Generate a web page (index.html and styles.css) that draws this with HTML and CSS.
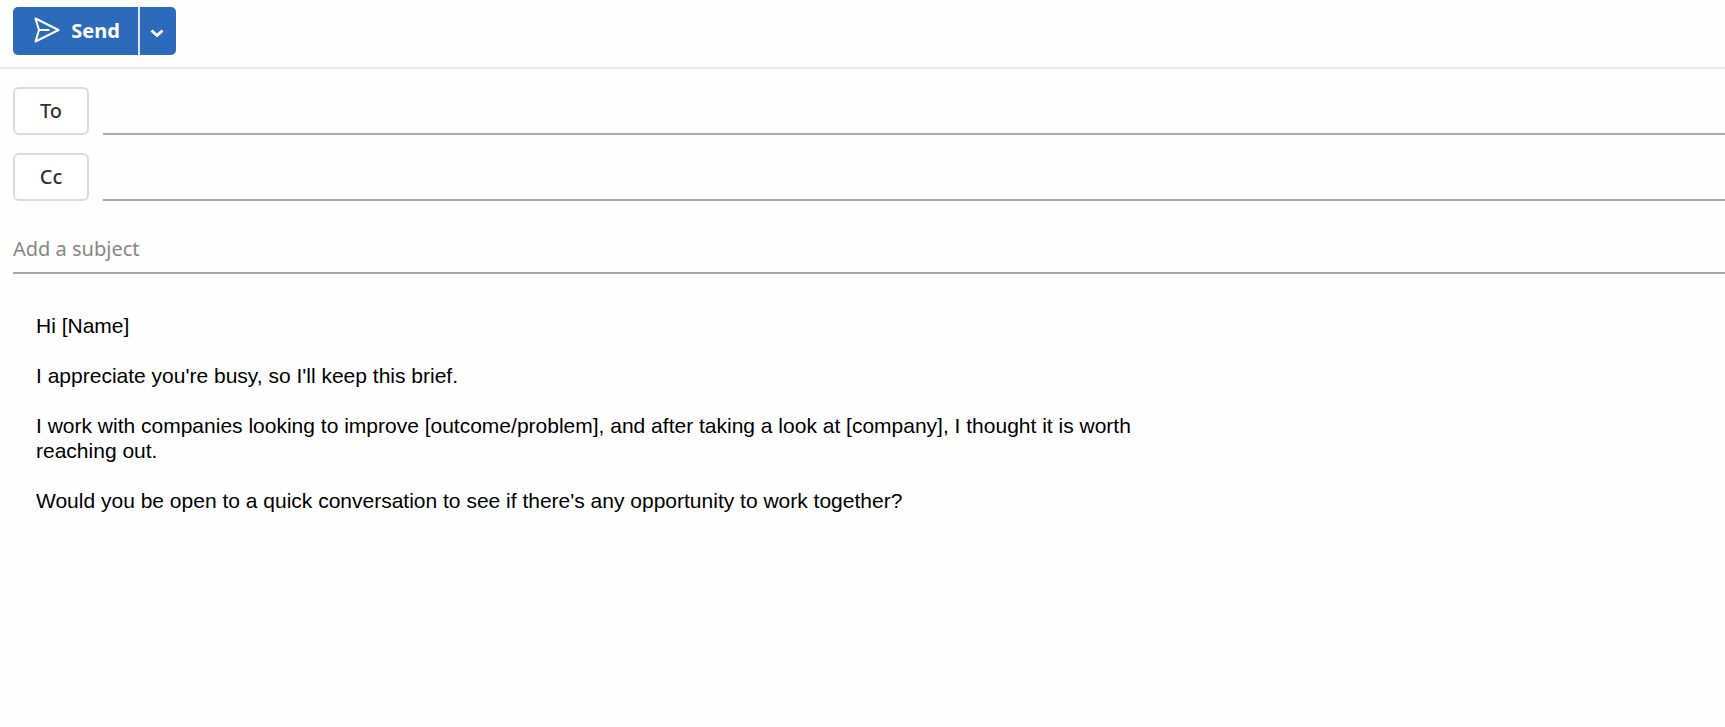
FILE: index.html
```html
<!DOCTYPE html>
<html lang="en">
<head>
<meta charset="UTF-8">
<meta name="viewport" content="width=device-width, initial-scale=1.0">
<title>New message</title>
<link rel="stylesheet" href="styles.css">
</head>
<body>

<form class="compose">
  <div class="toolbar">
    <div class="send-group">
      <button type="submit" class="send-button">
        <svg class="send-icon" viewBox="0 0 26 26" aria-hidden="true">
          <path d="M1.5 1.5 L24.5 13 L1.5 24.5 L5 13 Z M5 13 H15.5"/>
        </svg>
        Send
      </button>
      <button type="button" class="send-options" aria-label="More send options">
        <svg class="chevron-icon" viewBox="0 0 14 8" aria-hidden="true">
          <path d="M1.5 1.5 L7 6.5 L12.5 1.5"/>
        </svg>
      </button>
    </div>
  </div>

  <div class="fields">
    <div class="recipient-row">
      <button type="button" class="recipient-button">To</button>
      <input type="text" class="line-input" aria-label="To">
    </div>
    <div class="recipient-row">
      <button type="button" class="recipient-button">Cc</button>
      <input type="text" class="line-input" aria-label="Cc">
    </div>
    <input type="text" class="line-input subject" placeholder="Add a subject" aria-label="Subject">
  </div>

  <textarea class="message" rows="14" aria-label="Message body" spellcheck="false">
Hi [Name]

I appreciate you're busy, so I'll keep this brief.

I work with companies looking to improve [outcome/problem], and after taking a look at [company], I thought it is worth reaching out.

Would you be open to a quick conversation to see if there's any opportunity to work together?</textarea>
</form>

</body>
</html>
```

FILE: styles.css
```css
* {
  box-sizing: border-box;
}

body {
  margin: 0;
  background-color: #fefefe;
  font-family: "Noto Sans", sans-serif;
  font-size: 20px;
}

button,
input {
  font-family: inherit;
  font-size: inherit;
}

.compose {
  display: flex;
  flex-direction: column;
}

.toolbar {
  padding: 7px 13px 12px;
  border-bottom: 2px solid #e9e9e9;
}

.send-group {
  display: inline-flex;
  height: 48px;
  vertical-align: top;
  border-radius: 5px;
  overflow: hidden;
}

.send-button,
.send-options {
  display: flex;
  align-items: center;
  justify-content: center;
  padding: 0;
  border: none;
  background-color: #2c6abb;
  color: #fff;
  cursor: pointer;
}

.send-button {
  gap: 11px;
  width: 127px;
  padding: 0 0 2px 3px;
  font-weight: 700;
  border-right: 2px solid #dce4f0;
}

.send-options {
  width: 36px;
  padding-right: 2px;
}

.send-button:hover,
.send-options:hover {
  background-color: #245a9f;
}

.send-icon,
.chevron-icon {
  fill: none;
  stroke: #fff;
  stroke-width: 2;
  stroke-linejoin: round;
}

.send-icon {
  width: 26px;
  height: 26px;
}

.chevron-icon {
  width: 14px;
  height: 8px;
  margin-top: 4px;
  stroke-width: 3;
}

.fields {
  display: flex;
  flex-direction: column;
  gap: 18px;
  padding: 18px 0 0 13px;
}

.recipient-row {
  display: flex;
  gap: 14px;
}

.recipient-button {
  width: 76px;
  height: 48px;
  padding: 0 0 2px;
  border: 2px solid #dcdcdc;
  border-radius: 6px;
  background-color: #fff;
  color: #333;
  font-weight: 500;
  cursor: pointer;
}

.line-input {
  flex: 1;
  min-width: 0;
  padding: 0;
  border: none;
  border-bottom: 2px solid #a9a9a9;
  border-radius: 0;
  background: transparent;
  outline: none;
}

.line-input.subject {
  flex: none;
  height: 55px;
  padding-top: 6px;
}

.line-input::placeholder {
  color: #868686;
  opacity: 1;
}

.message {
  max-width: 1140px;
  margin: 39px 0 0 36px;
  padding: 0;
  border: none;
  outline: none;
  resize: none;
  background: transparent;
  color: #000;
  font-family: "Liberation Sans", Arial, sans-serif;
  font-size: 21px;
  line-height: 25px;
}
```
